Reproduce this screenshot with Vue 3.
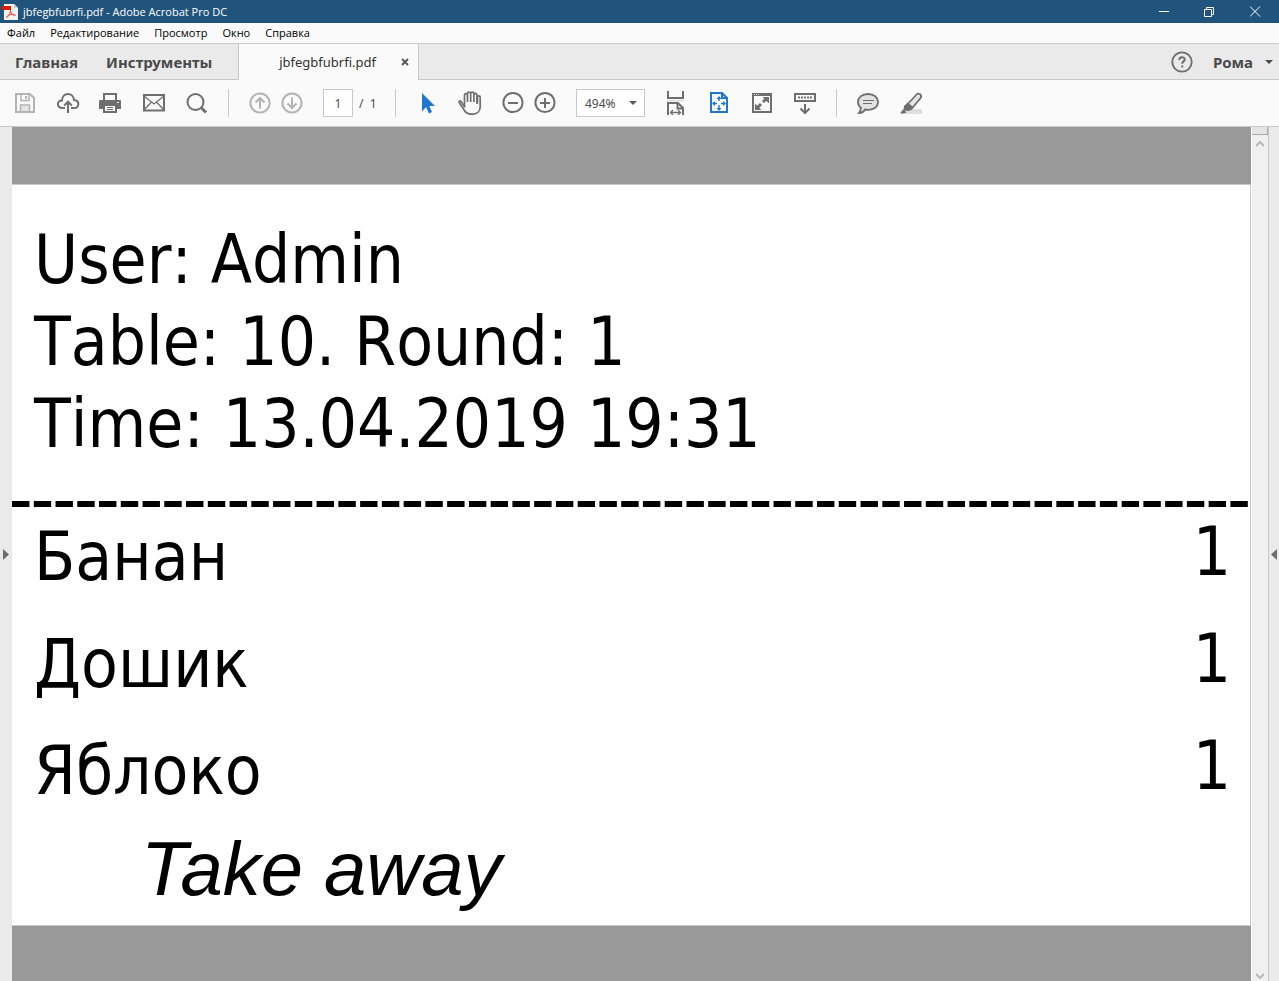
<template>
  <div class="window">
    <header class="title-bar">
      <svg class="app-icon" width="16" height="16" viewBox="0 0 16 16">
        <path d="M2 0h10l4 4v12H2z" fill="#f4f2f1" />
        <path d="M12 0v4h4z" fill="#cfcfcf" />
        <path d="M4 13.500c3-1 5-5 4.500-7.500M8.500 6c0 3 2 5.500 5 5.500M5.500 12c2-1.500 5-2 8-1" fill="none" stroke="#e2574c" stroke-width="1.200" />
        <path d="M0 2h9v4H0z" fill="#e01b00" />
      </svg>
      <span class="title">{{ fileName }} - Adobe Acrobat Pro DC</span>
      <div class="window-controls">
        <button class="window-btn" aria-label="Свернуть">
          <svg width="12" height="12" viewBox="0 0 12 12"><path d="M1 5.500h10" /></svg>
        </button>
        <button class="window-btn" aria-label="Свернуть в окно">
          <svg width="12" height="12" viewBox="0 0 12 12"><path d="M.5 3.500h7v7h-7zM2.500 3.500v-2h7v7h-2" /></svg>
        </button>
        <button class="window-btn" aria-label="Закрыть">
          <svg width="12" height="12" viewBox="0 0 12 12"><path d="M0 .5l10 10M10 .5l-10 10" /></svg>
        </button>
      </div>
    </header>

    <nav class="menu-bar">
      <button v-for="item in menu" :key="item" class="menu-item">{{ item }}</button>
    </nav>

    <div class="tab-bar">
      <div class="main-tabs">
        <button class="main-tab">Главная</button>
        <button class="main-tab">Инструменты</button>
      </div>
      <div class="file-tab">
        <span class="file-name">{{ fileName }}</span>
        <button class="tab-close" aria-label="Закрыть вкладку">
          <svg width="8" height="8" viewBox="0 0 8 8"><path d="M1 1l6 6M7 1L1 7" stroke="#555" stroke-width="1.800" /></svg>
        </button>
      </div>
      <div class="account">
        <button class="icon-btn" aria-label="Справка">
          <svg width="24" height="24" viewBox="0 0 24 24" fill="none" stroke="#6e6e6e" stroke-width="1.800">
            <circle cx="12" cy="12" r="9.700" />
            <path d="M9.300 10c0-3.600 5.400-3.600 5.400-.6 0 2-2.500 2-2.500 4.300" stroke-width="2" />
            <path d="M11.200 15.500h2v2h-2z" fill="#6e6e6e" stroke="none" />
          </svg>
        </button>
        <button class="user">
          Рома
          <svg width="8" height="4" viewBox="0 0 8 4"><path d="M0 0h8L4 4z" fill="#4b4b4b" /></svg>
        </button>
      </div>
    </div>

    <div class="toolbar">
      <!-- 文件操作 -->
      <button class="icon-btn" aria-label="Сохранить">
        <svg width="24" height="24" viewBox="0 0 24 24" fill="none" stroke="#b3b3b3" stroke-width="2">
          <path d="M3 3h14l4 4v14H3z" />
          <path d="M8 3v6.500h8V3" stroke-width="1.500" />
          <path d="M7.500 20v-6h9v6" fill="#e4e4e4" stroke-width="1.500" />
          <path d="M13 5v3" />
        </svg>
      </button>
      <button class="icon-btn" aria-label="Отправить в облако">
        <svg width="24" height="24" viewBox="0 0 24 24" fill="none" stroke="#6e6e6e" stroke-width="2">
          <path d="M9 17H6.500C.5 17 .5 9.500 6 9.500 6 .8 17.500.8 18 9c6 .5 5.500 8 0 8h-3" />
          <path d="M12 22V11M8.200 14.500L12 10.700l3.800 3.800" />
        </svg>
      </button>
      <button class="icon-btn" aria-label="Печать">
        <svg width="24" height="24" viewBox="0 0 24 24">
          <path d="M5 9V3h12v6" fill="#fafafa" stroke="#6e6e6e" stroke-width="2" />
          <path d="M0 10q0-1 1-1h20q1 0 1 1v8H0z" fill="#6e6e6e" />
          <path d="M5 14h12v7H5z" fill="#fafafa" stroke="#6e6e6e" stroke-width="2" />
          <path d="M8 16.500h6M8 18.500h6" stroke="#6e6e6e" />
          <path d="M18 11.500h2" stroke="#fafafa" />
        </svg>
      </button>
      <button class="icon-btn" aria-label="Отправить по почте">
        <svg width="24" height="24" viewBox="0 0 24 24" fill="none" stroke="#6e6e6e">
          <path d="M2 4h20v15.500H2z" stroke-width="2" />
          <path d="M2 5l10 8 10-8M2 19l7.500-8M22 19l-7.500-8" stroke-width="1.300" />
        </svg>
      </button>
      <button class="icon-btn" aria-label="Найти">
        <svg width="24" height="24" viewBox="0 0 24 24" fill="none" stroke="#6e6e6e">
          <circle cx="10.500" cy="11" r="8" stroke-width="2" />
          <path d="M16 16.500l5 5" stroke-width="3" />
        </svg>
      </button>

      <span class="separator"></span>

      <!-- 翻页 -->
      <div class="tool-pair">
        <button class="icon-btn" aria-label="Предыдущая страница">
          <svg width="24" height="24" viewBox="0 0 24 24" fill="none" stroke="#b3b3b3" stroke-width="2">
            <circle cx="12" cy="12" r="9.600" />
            <path d="M12 17.500V7M7.500 11.500L12 7l4.500 4.500" />
          </svg>
        </button>
        <button class="icon-btn" aria-label="Следующая страница">
          <svg width="24" height="24" viewBox="0 0 24 24" fill="none" stroke="#b3b3b3" stroke-width="2">
            <circle cx="12" cy="12" r="9.600" />
            <path d="M12 6.500V17M7.500 12.500L12 17l4.500-4.500" />
          </svg>
        </button>
      </div>
      <label class="page-number">
        <input v-model="page" type="text" aria-label="Номер страницы" />
        <span>/&nbsp; 1</span>
      </label>

      <span class="separator"></span>

      <button class="icon-btn" aria-label="Выделение">
        <svg width="24" height="24" viewBox="0 0 24 24">
          <path d="M7 2v18.500l4-4.500 3 6.500 3-1.500-2.700-6H20z" fill="#1f75cf" />
        </svg>
      </button>
      <button class="icon-btn" aria-label="Рука">
        <svg width="24" height="24" viewBox="0 0 24 24" fill="none" stroke="#6e6e6e" stroke-width="1.700" stroke-linecap="round">
          <path d="M6.500 15.500L3.200 10.700C1.800 8.800.5 10.300 1.700 12.200L6.500 19.500C8.500 23 11 23.200 14 23.200c5 0 8.200-3 8.200-7.200V6.200c0-1.900-2.700-1.900-2.700 0V12" />
          <path d="M6.500 15.500V4.200c0-2 3-2 3 0V11V2.700c0-2 3.200-2 3.200 0V11V2.700c0-2 3.200-2 3.200 0V11V3.700c0-1.900 3-1.900 3 0V12" />
        </svg>
      </button>
      <div class="tool-pair">
        <button class="icon-btn" aria-label="Уменьшить">
          <svg width="24" height="24" viewBox="0 0 24 24" fill="none" stroke="#6e6e6e" stroke-width="2">
            <circle cx="12" cy="11.500" r="9.600" />
            <path d="M7 12h10" />
          </svg>
        </button>
        <button class="icon-btn" aria-label="Увеличить">
          <svg width="24" height="24" viewBox="0 0 24 24" fill="none" stroke="#6e6e6e" stroke-width="2">
            <circle cx="12" cy="11.500" r="9.600" />
            <path d="M7 12h10M12 7v10" />
          </svg>
        </button>
      </div>
      <div class="zoom">
        <select v-model="zoom" aria-label="Масштаб">
          <option v-for="z in zoomLevels" :key="z" :value="z">{{ z }}</option>
        </select>
        <svg class="zoom-arrow" width="8" height="4" viewBox="0 0 8 4"><path d="M0 0h8L4 4z" fill="#5a5a5a" /></svg>
      </div>

      <button class="icon-btn" aria-label="По ширине">
        <svg width="24" height="24" viewBox="0 0 24 24" fill="none" stroke="#6e6e6e" stroke-width="2">
          <path d="M4 0v7h15V0" />
          <path d="M3 9h17v1.500H3z" fill="#dedede" stroke="none" />
          <path d="M4 24V12h10l5 5v7M13.500 12v5.500H19" />
          <path d="M6.500 21.500h10M9 19l-2.500 2.500L9 24M14 19l2.500 2.500L14 24" stroke-width="1.300" />
        </svg>
      </button>
      <button class="icon-btn" aria-label="Страница целиком">
        <svg width="24" height="24" viewBox="0 0 24 24" fill="none" stroke="#1f75cf" stroke-width="2">
          <path d="M4 2h11l5 5v14H4zM15 2v5h5" />
          <path d="M12 6v4M12 14v5M6 12.500h4M14 12.500h4" stroke-width="1.400" />
          <path d="M12 5l2.500 3h-5zM12 20l2.500-3h-5zM5 12.500L8 10v5zM19 12.500L16 10v5z" fill="#1f75cf" stroke="none" />
        </svg>
      </button>
      <button class="icon-btn" aria-label="Полноэкранный режим">
        <svg width="24" height="24" viewBox="0 0 24 24" fill="none" stroke="#6e6e6e" stroke-width="2">
          <path d="M3 3h18v18H3z" />
          <path d="M2 2h20v3H2z" fill="#6e6e6e" stroke="none" />
          <path d="M4 3.500h5" stroke="#ddd" stroke-width="1" stroke-dasharray="1 1" />
          <path d="M13 11l4-4M7 17l4-4" stroke-width="3" />
          <path d="M12.500 6H19v6.500zM5 12.500V19h6.500z" fill="#6e6e6e" stroke="none" />
        </svg>
      </button>
      <button class="icon-btn" aria-label="Режим чтения">
        <svg width="24" height="24" viewBox="0 0 24 24" fill="none" stroke="#6e6e6e" stroke-width="2">
          <path d="M2 3h20v7H2z" />
          <path d="M5 6.500h14" stroke-dasharray="2 1" />
          <path d="M12 13v8M7.500 17.500L12 22l4.500-4.500" />
        </svg>
      </button>

      <span class="separator"></span>

      <!-- 批注工具 -->
      <button class="icon-btn" aria-label="Комментарий">
        <svg width="24" height="24" viewBox="0 0 24 24" fill="#e2e2e2" stroke="#6e6e6e" stroke-width="1.800">
          <path d="M12 3C5.500 3 2 6.700 2 11c0 2.700 1 4.500 3 6-.2 2-.8 3.500-2 5 3 0 5-1.500 6-3.500 7.500 1.300 13-2 13-7.500 0-4.500-4-8-10-8z" />
          <path d="M7 9.500h11M7 12.500h9" stroke-width="1.200" />
        </svg>
      </button>
      <button class="icon-btn" aria-label="Выделить текст">
        <svg width="24" height="24" viewBox="0 0 24 24">
          <path d="M8 18h15v5H4z" fill="#dedede" />
          <path d="M7 15L17.500 3.500c1.500-1.800 5.500-.5 4.500 3L12.500 18z" fill="#e4e4e4" stroke="#6e6e6e" stroke-width="1.700" />
          <path d="M8.500 11.500l6 4.500-4 4-6-.5.500-4.500zM4 18.500l3.500 2.800L5 22.500H1z" fill="#6e6e6e" />
        </svg>
      </button>
    </div>

    <div class="workspace">
      <button class="side-panel left" aria-label="Открыть панель навигации">
        <svg width="6" height="11" viewBox="0 0 6 11"><path d="M0 0v11l6-5.500z" fill="#6e6e6e" /></svg>
      </button>

      <main class="canvas">
        <article class="receipt">
          <div class="receipt-head">
            <div v-for="line in headLines" :key="line">{{ line }}</div>
          </div>
          <svg class="cut-line" height="6">
            <line x1="0" y1="3" x2="100%" y2="3" pathLength="569" stroke="#000" stroke-width="6" stroke-dasharray="8 2" />
          </svg>
          <ul class="items">
            <li v-for="item in items" :key="item.name" class="item">
              <span class="item-name">{{ item.name }}</span>
              <span class="item-count">{{ item.count }}</span>
            </li>
          </ul>
          <p class="note">Take away</p>
        </article>
      </main>

      <div class="scrollbar">
        <div class="split-handle"></div>
        <svg width="8" height="6" viewBox="0 0 8 6"><path d="M0 5l4-4 4 4" /></svg>
        <svg class="scroll-down" width="8" height="6" viewBox="0 0 8 6"><path d="M0 1l4 4 4-4" /></svg>
      </div>

      <button class="side-panel right" aria-label="Открыть панель инструментов">
        <svg width="6" height="11" viewBox="0 0 6 11"><path d="M6 0v11L0 5.500z" fill="#6e6e6e" /></svg>
      </button>
    </div>
  </div>
</template>

<script setup>
import { ref } from 'vue'

const fileName = 'jbfegbfubrfi.pdf'
const menu = ['Файл', 'Редактирование', 'Просмотр', 'Окно', 'Справка']

const page = ref('1')
const zoom = ref('494%')
const zoomLevels = ['100%', '200%', '400%', '494%', '800%']

// 小票内容
const headLines = [
  'User: Admin',
  'Table: 10. Round: 1',
  'Time: 13.04.2019 19:31'
]
const items = [
  { name: 'Банан', count: 1 },
  { name: 'Дошик', count: 1 },
  { name: 'Яблоко', count: 1 }
]
</script>

<style>
body {
  margin: 0;
}
</style>

<style scoped>
.window {
  display: flex;
  flex-direction: column;
  min-height: 100vh;
  font-family: "Noto Sans", "Open Sans", sans-serif;
  font-size: 12px;
  color: #000;
  background: #fafafa;
}

button {
  padding: 0;
  border: none;
  background: none;
  font: inherit;
  color: inherit;
}

svg {
  display: block;
  flex: none;
}

.title-bar {
  display: flex;
  align-items: center;
  height: 23px;
  padding-left: 2px;
  background: #20547c;
  color: #fff;
  font-family: "Open Sans", sans-serif;
  font-size: 11px;
}

.title {
  flex: 1;
  margin-left: 5px;
}

.window-controls {
  display: flex;
  height: 21px;
}

.window-btn {
  display: flex;
  align-items: center;
  justify-content: center;
  width: 46px;
}

.window-btn svg {
  fill: none;
  stroke: #fff;
}

.menu-bar {
  display: flex;
  gap: 15px;
  height: 18px;
  padding: 0 7px 2px;
  font-family: "Open Sans", sans-serif;
  font-size: 11px;
}

.tab-bar {
  display: flex;
  height: 36px;
  border-top: 1px solid #c8c8c8;
  background: #eaeaea;
  color: #4b4b4b;
}

.main-tabs,
.account {
  display: flex;
  align-items: center;
  border-bottom: 1px solid #c8c8c8;
}

.main-tabs {
  gap: 28px;
  width: 223px;
  padding-left: 15px;
}

.main-tab,
.user {
  font-size: 15px;
  font-weight: 700;
}

.file-tab {
  display: flex;
  align-items: center;
  justify-content: flex-end;
  gap: 25px;
  width: 170px;
  padding-right: 9px;
  border-left: 1px solid #c8c8c8;
  border-right: 1px solid #c8c8c8;
  background: #fafafa;
  font-size: 13px;
  color: #323232;
}

.account {
  flex: 1;
  justify-content: flex-end;
  gap: 19px;
  padding-right: 6px;
}

.user {
  display: flex;
  align-items: center;
  gap: 12px;
}

.icon-btn {
  flex: none;
  width: 24px;
  height: 24px;
}

.toolbar {
  display: flex;
  align-items: center;
  gap: 19px;
  height: 46px;
  padding-left: 13px;
  border-bottom: 1px solid #c8c8c8;
  color: #4b4b4b;
}

.separator {
  width: 1px;
  height: 28px;
  background: #c8c8c8;
}

.tool-pair {
  display: flex;
  gap: 8px;
}

.page-number {
  display: flex;
  align-items: center;
  gap: 6px;
  width: 53px;
  white-space: nowrap;
}

.page-number input {
  box-sizing: border-box;
  flex: none;
  width: 30px;
  height: 28px;
  padding: 0;
  border: 1px solid #c8c8c8;
  background: #fff;
  font: inherit;
  color: inherit;
  text-align: center;
}

.zoom {
  position: relative;
  width: 69px;
}

.zoom select {
  display: block;
  width: 100%;
  height: 28px;
  padding: 0 8px;
  border: 1px solid #c8c8c8;
  border-radius: 0;
  background: #fff;
  font: inherit;
  color: inherit;
  appearance: none;
}

.zoom-arrow {
  position: absolute;
  top: 12px;
  right: 8px;
  pointer-events: none;
}

.workspace {
  display: flex;
  flex: 1;
}

.side-panel {
  display: flex;
  align-items: center;
  flex: none;
  background: #eaeaea;
}

.side-panel.left {
  width: 12px;
  padding-left: 3px;
}

.side-panel.right {
  width: 11px;
  padding-left: 2px;
  border-left: 1px solid #c8c8c8;
}

.canvas {
  flex: 1;
  padding: 57px 0 55px;
  background: #999;
}

.receipt {
  border: 1px solid #c8c8c8;
  border-left: none;
  padding: 34px 0 16px;
  background: #fff;
  font-family: "DejaVu Sans Condensed", "DejaVu Sans", sans-serif;
  font-size: 67px;
  font-kerning: none;
  line-height: 82px;
}

.receipt-head {
  padding: 0 22px;
}

.cut-line {
  width: 100%;
  margin-top: 36px;
}

.items {
  display: flex;
  flex-direction: column;
  gap: 25px;
  margin: 9px 0 17px;
  padding: 0 19px 0 22px;
  list-style: none;
}

.item {
  display: flex;
  align-items: flex-start;
  justify-content: space-between;
}

.item-count {
  line-height: 72px;
}

.note {
  margin: 0;
  padding-left: 129px;
  font-family: "Liberation Sans", sans-serif;
  font-size: 76px;
  font-style: italic;
  font-kerning: normal;
  line-height: 80px;
}

.scrollbar {
  display: flex;
  flex-direction: column;
  align-items: center;
  width: 16px;
  border-left: 1px solid #fff;
  background: #f0f0f0;
}

.scrollbar svg {
  margin-top: 6px;
  fill: none;
  stroke: #b8b8b8;
  stroke-width: 2;
}

.scrollbar .scroll-down {
  margin: auto 0 2px;
}

.split-handle {
  align-self: stretch;
  height: 7px;
  border-right: 1px solid #aaa;
  border-bottom: 1px solid #aaa;
  background: #e4e4e4;
}
</style>
